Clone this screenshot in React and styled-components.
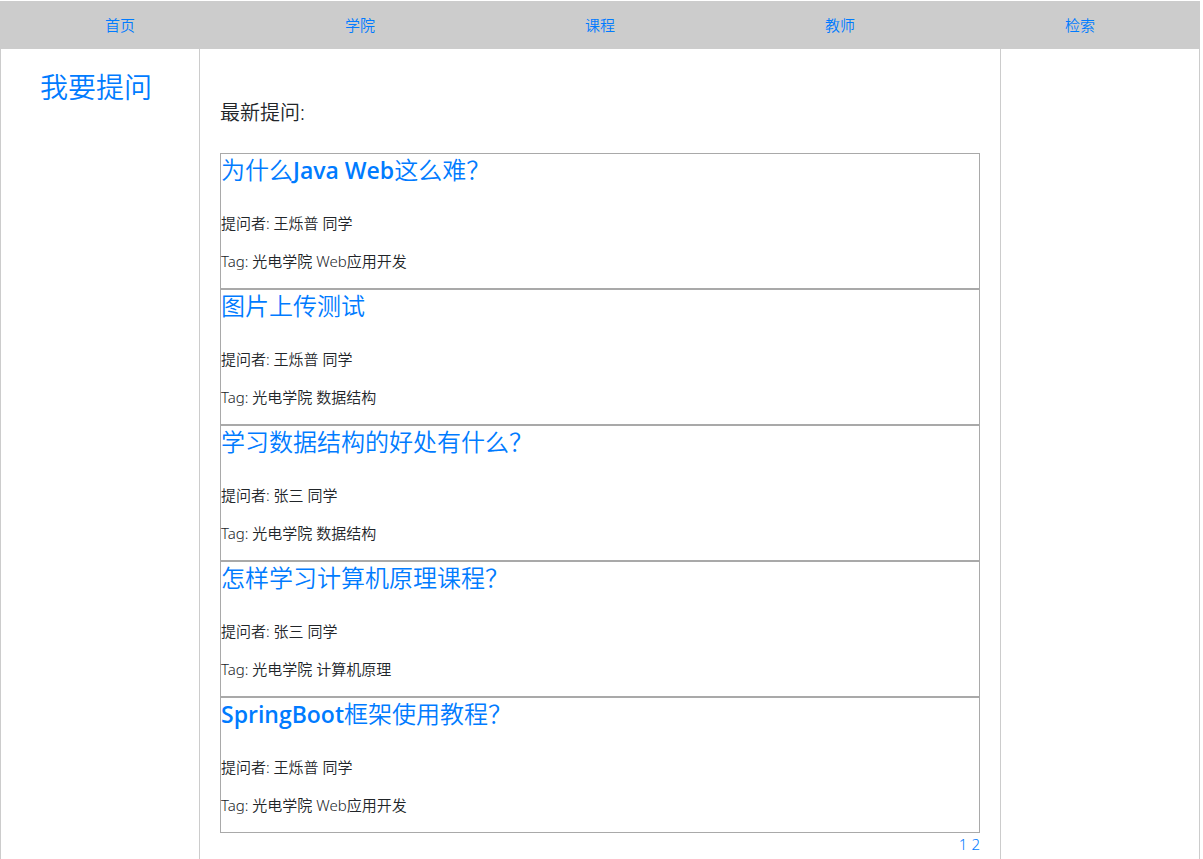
import React from "react";
import styled, { createGlobalStyle } from "styled-components";

const GlobalStyle = createGlobalStyle`
  *, *::before, *::after { box-sizing: border-box; }
  body {
    margin: 0;
    background: #fff;
    color: #212529;
    font-family: "Noto Sans", "Noto Sans CJK SC", sans-serif;
    font-size: 15px;
    line-height: 22px;
    font-weight: 350;
  }
  h1, h2, p, ul { margin: 0; padding: 0; }
`;

const Page = styled.div`
  display: flex;
  flex-direction: column;
  min-height: 100vh;
  padding: 1px 3px 0 0;
`;

const Link = styled.a`
  color: #007bff;
  text-decoration: none;
  &:hover { text-decoration: underline; }
`;

const NavBar = styled.nav`
  display: flex;
  background: #ccc;
`;

const NavLink = styled(Link)`
  flex: 1;
  line-height: 48px;
  text-align: center;
`;

const Columns = styled.div`
  display: flex;
  flex: 1;
`;

const Side = styled.aside`
  flex: 0 0 200px;
  padding: 16px 0 0 39px;
  border: solid #ccc;
  border-width: 0 1px;
`;

const AskLink = styled(Link)`
  display: block;
  font-size: 28px;
  line-height: 44px;
`;

const Main = styled.main`
  flex: 1;
  min-width: 0;
  padding: 48px 20px 0;
`;

const Heading = styled.h1`
  margin-bottom: 24px;
  font-size: 20px;
  line-height: 32px;
  font-weight: 350;
`;

const QuestionList = styled.ul`
  list-style: none;
`;

const Question = styled.li`
  border: 1px solid #a9a9a9;
`;

const Title = styled.h2`
  margin-bottom: 26px;
  font-size: 24px;
  line-height: 32px;
  font-weight: 350;
`;

const Latin = styled.span`
  font-family: "Open Sans", sans-serif;
  font-size: 23px;
  font-weight: 600;
`;

const Detail = styled.p`
  margin-bottom: 16px;
`;

const Pager = styled.nav`
  display: flex;
  justify-content: flex-end;
  gap: 4px;
`;

const navItems = ["首页", "学院", "课程", "教师", "检索"];

const questions = [
  { title: <>为什么<Latin>Java Web</Latin>这么难？</>, author: "王烁普", tag: "光电学院 Web应用开发" },
  { title: "图片上传测试", author: "王烁普", tag: "光电学院 数据结构" },
  { title: "学习数据结构的好处有什么？", author: "张三", tag: "光电学院 数据结构" },
  { title: "怎样学习计算机原理课程？", author: "张三", tag: "光电学院 计算机原理" },
  { title: <><Latin>SpringBoot</Latin>框架使用教程？</>, author: "王烁普", tag: "光电学院 Web应用开发" },
];

export default function App() {
  return (
    <Page lang="zh-CN">
      <GlobalStyle />
      <NavBar>
        {navItems.map((item) => (
          <NavLink key={item} href="#">{item}</NavLink>
        ))}
      </NavBar>
      <Columns>
        <Side>
          <AskLink href="#">我要提问</AskLink>
        </Side>
        <Main>
          <Heading>最新提问:</Heading>
          <QuestionList>
            {questions.map((q, i) => (
              <Question key={i}>
                <Title><Link href="#">{q.title}</Link></Title>
                <Detail>提问者: {q.author} 同学</Detail>
                <Detail>Tag: {q.tag}</Detail>
              </Question>
            ))}
          </QuestionList>
          <Pager>
            <Link href="#">1</Link>
            <Link href="#">2</Link>
          </Pager>
        </Main>
        <Side />
      </Columns>
    </Page>
  );
}
